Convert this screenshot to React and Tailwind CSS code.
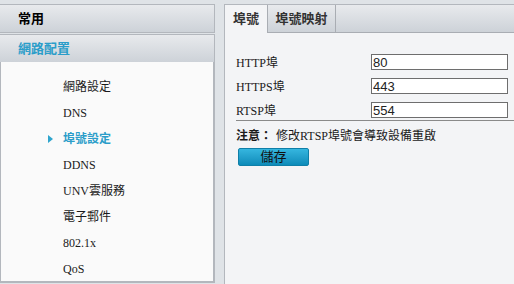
const menu = ["網路設定", "DNS", "埠號設定", "DDNS", "UNV雲服務", "電子郵件", "802.1x", "QoS"];

const rows = [
  { label: "HTTP埠", value: "80" },
  { label: "HTTPS埠", value: "443" },
  { label: "RTSP埠", value: "554" },
];

const serif = "font-['Liberation_Serif','Noto_Sans_CJK_TC',serif]";

export default function App() {
  return (
    <div className={`w-[514px] h-[284px] overflow-hidden bg-[#dfe3e7] flex pt-[4px] ${serif} text-[12px] text-[#1a1a1a]`}>
      <div className="w-[215px] flex flex-col shrink-0">
        <div className="h-[29px] border-t border-b border-r border-[#b3b7bd] bg-gradient-to-b from-[#e8eaed] to-[#cdd2d8] flex items-center pl-[18px] font-bold text-[13px] text-black">
          常用
        </div>
        <div className="mt-[1px] h-[28px] border-t border-r border-[#b3b7bd] bg-gradient-to-b from-[#e8eaed] to-[#cdd2d8] flex items-center pl-[18px] font-bold text-[13px] text-[#2b9dc9]">
          網路配置
        </div>
        <div className="h-[221px] bg-[#fafafa] border-l border-r-2 border-b-2 border-[#b3b7bd] pt-[12px]">
          {menu.map((m) => {
            const active = m === "埠號設定";
            return (
              <div key={m} className="h-[26px] flex items-center relative pl-[62px]">
                {active && (
                  <span className="absolute left-[47px] top-[9px] w-0 h-0 border-y-[4px] border-y-transparent border-l-[5px] border-l-[#2fa5cd]" />
                )}
                <span className={active ? "font-bold text-[#2b9dc9]" : ""}>{m}</span>
              </div>
            );
          })}
        </div>
      </div>

      <div className="ml-[9px] flex-1 bg-[#f3f4f6] border-l border-t border-[#b3b7bd] flex flex-col">
        <div className="h-[28px] flex bg-gradient-to-b from-[#e8eaed] to-[#cdd2d8] border-b border-[#a9adb3] text-[13px] font-bold text-[#333]">
          <div className="w-[43px] h-[28px] bg-[#f3f4f6] border-r border-[#a9adb3] flex items-center justify-center -mb-px">
            埠號
          </div>
          <div className="w-[68px] border-r border-[#a9adb3] flex items-center justify-center">
            埠號映射
          </div>
        </div>

        <div className="pl-[11px] pt-[21px]">
          {rows.map((r) => (
            <div key={r.label} className="h-[24px] flex items-start">
              <span className="w-[135px] leading-[15px] pt-[2px]">{r.label}</span>
              <input
                readOnly
                value={r.value}
                className="w-[137px] h-[16px] bg-white border border-[#6e6e6e] px-[1px] text-[13px] leading-[14px] text-[#222] font-['Liberation_Sans',sans-serif] outline-none"
              />
            </div>
          ))}
          <div className="border-t border-[#8a8a8a] mt-[-6px] pt-[8px] flex items-center leading-[14px]">
            <span className="font-bold">注意：</span>
            <span className="ml-[4px]">修改RTSP埠號會導致設備重啟</span>
          </div>
          <button className="mt-[5px] ml-[2px] w-[71px] h-[18px] rounded-[2px] border border-[#0f7fa8] bg-gradient-to-b from-[#35b6df] to-[#0b8bb9] text-[13px] leading-[16px] text-[#111] flex items-center justify-center">
            儲存
          </button>
        </div>
      </div>
    </div>
  );
}
